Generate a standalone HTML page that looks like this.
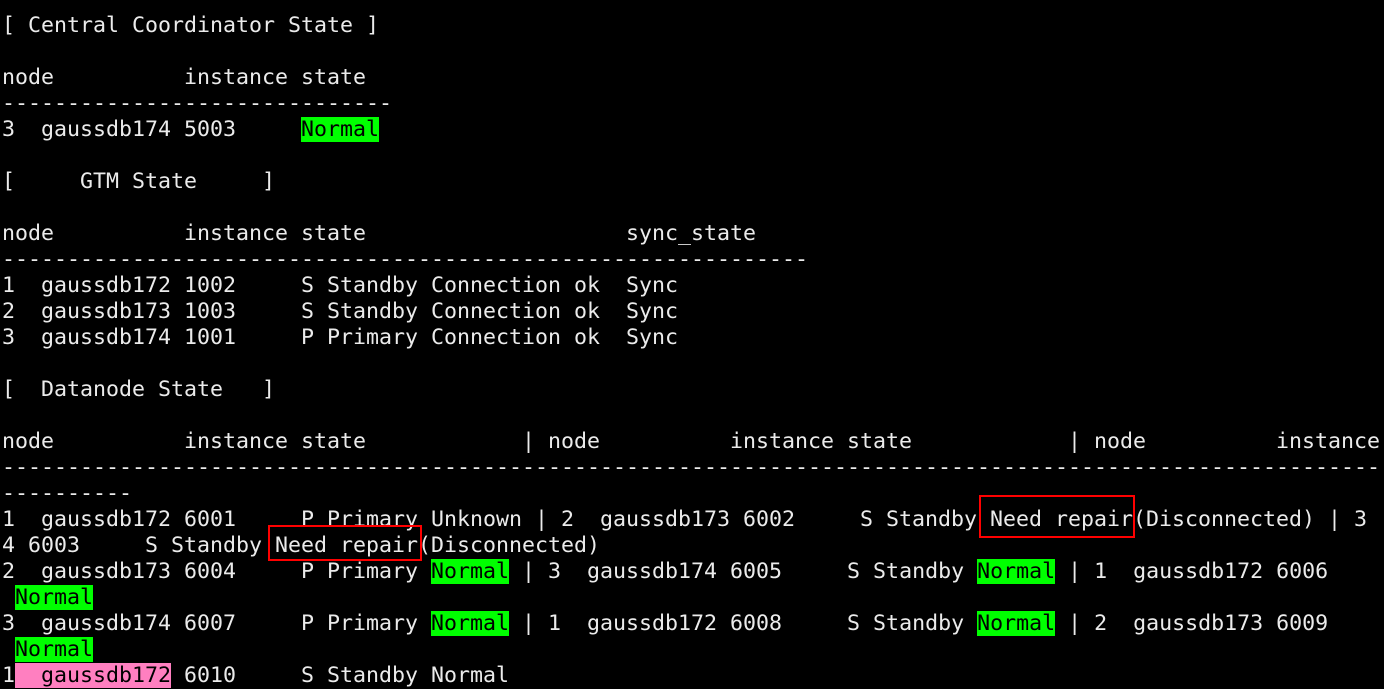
<!DOCTYPE html>
<html><head><meta charset="utf-8"><style>
html,body{margin:0;padding:0;background:#000;width:1384px;height:667px;overflow:hidden}
pre{margin:0;position:absolute;left:2px;top:13px;font-family:"DejaVu Sans Mono","Liberation Mono",monospace;font-size:21.6px;line-height:26px;color:#ebebeb;white-space:pre}
.g{background:#00ff00;color:#000}
.p{background:#ff7fc0;color:#000}
.box{position:absolute;border:2px solid #ff0000;box-sizing:border-box}
</style></head><body>
<pre>[ Central Coordinator State ]

node          instance state
------------------------------
3  gaussdb174 5003     <span class="g">Normal</span>

[     GTM State     ]

node          instance state                    sync_state
--------------------------------------------------------------
1  gaussdb172 1002     S Standby Connection ok  Sync
2  gaussdb173 1003     S Standby Connection ok  Sync
3  gaussdb174 1001     P Primary Connection ok  Sync

[  Datanode State   ]

node          instance state            | node          instance state            | node          instance
----------------------------------------------------------------------------------------------------------
----------
1  gaussdb172 6001     P Primary Unknown | 2  gaussdb173 6002     S Standby Need repair(Disconnected) | 3
4 6003     S Standby Need repair(Disconnected)
2  gaussdb173 6004     P Primary <span class="g">Normal</span> | 3  gaussdb174 6005     S Standby <span class="g">Normal</span> | 1  gaussdb172 6006
 <span class="g">Normal</span>
3  gaussdb174 6007     P Primary <span class="g">Normal</span> | 1  gaussdb172 6008     S Standby <span class="g">Normal</span> | 2  gaussdb173 6009
 <span class="g">Normal</span>
1<span class="p">  gaussdb172</span> 6010     S Standby Normal</pre>
<div class="box" style="left:979px;top:495px;width:156px;height:43px"></div>
<div class="box" style="left:268px;top:525px;width:154px;height:36px"></div>
</body></html>
